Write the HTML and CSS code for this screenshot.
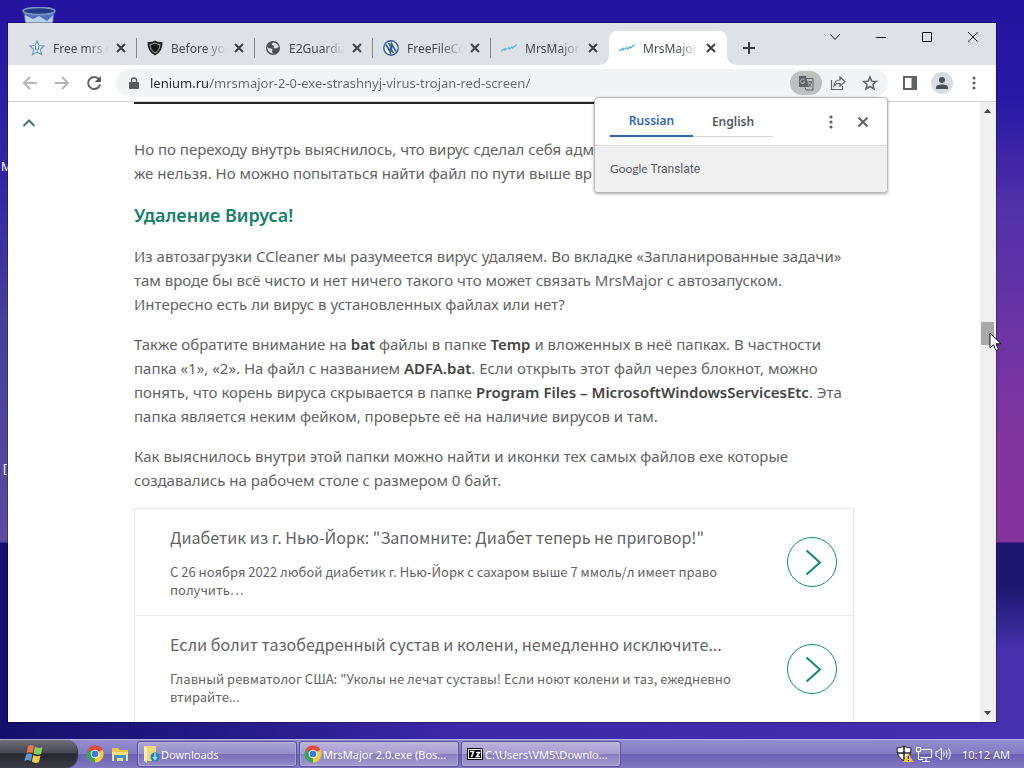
FILE: index.html
```html
<!DOCTYPE html>
<html lang="ru">
<head>
<meta charset="utf-8">
<title>MrsMajor 2.0.exe</title>
<link rel="stylesheet" href="styles.css">
</head>
<body class="desktop">
<svg class="bin" width="36" height="30" viewBox="0 0 36 30" aria-hidden="true"><path d="M2 3L6 29H30L34 3Z" fill="#4d6fbd"/><path d="M4 8L12 12L18 9L26 14L32 8L30 29H6Z" fill="#b9d1ec"/><ellipse cx="18" cy="4" rx="16" ry="3.500" fill="#203b83" stroke="#7d93c4" stroke-width="1.500"/></svg>
<span class="shortcut shortcut-a">M</span>
<span class="shortcut shortcut-b">[</span>

<div class="window">
  <header class="tabstrip">
    <nav class="tabs" aria-label="Tabs">
      <div class="tab"><svg class="ico" viewBox="0 0 16 16"><path d="M8 1L10 5.500L15 6L11.300 9.300L12.500 14.500L8 12L3.500 14.500L4.700 9.300L1 6L6 5.500Z" fill="#e3edf5" stroke="#6f9fc4" stroke-width="1.200"/><path d="M6.500 6V9.500Q8 11 9.500 9.500V6" fill="none" stroke="#4c8abd"/></svg><a class="tab-title" href="#">Free mrs m</a><button class="tab-close" aria-label="Close tab"><svg viewBox="0 0 16 16"><path d="M4 4L12 12M12 4L4 12"/></svg></button></div>
      <div class="tab"><svg class="ico" viewBox="0 0 16 16"><path d="M8 .5Q11 2.500 15.500 2Q16 11.500 8 15.500Q0 11.500 .5 2Q5 2.500 8 .5Z" fill="#222"/><path d="M8 3Q10.500 4.500 13 4.500Q12.800 10.500 8 13Q3.200 10.500 3 4.500Q5.500 4.500 8 3Z" fill="#17181a" stroke="#aaa"/></svg><a class="tab-title" href="#">Before you</a><button class="tab-close" aria-label="Close tab"><svg viewBox="0 0 16 16"><path d="M4 4L12 12M12 4L4 12"/></svg></button></div>
      <div class="tab"><svg class="ico" viewBox="0 0 16 16"><circle cx="8" cy="8" r="7" fill="#4c5055"/><path d="M2 7L5 8.500L7.500 9L7 11.500L8 13.500Q3 13.500 2 7ZM8 2.500Q6 4 7 5L9.500 6L8.500 8L11 8.500L13.800 7Q13 3 8 2.500Z" fill="#dee1e6"/></svg><a class="tab-title" href="#">E2Guardia</a><button class="tab-close" aria-label="Close tab"><svg viewBox="0 0 16 16"><path d="M4 4L12 12M12 4L4 12"/></svg></button></div>
      <div class="tab"><svg class="ico" viewBox="0 0 16 16"><circle cx="8" cy="8" r="7.200" fill="#fff" stroke="#2d6099" stroke-width="1.400"/><path d="M3 4.500L7.500 12.500V8.500L10.500 13M5.500 3L8.500 7.500V3.500L13 11.500" fill="none" stroke="#2d6099" stroke-width="1.700"/></svg><a class="tab-title" href="#">FreeFileCo</a><button class="tab-close" aria-label="Close tab"><svg viewBox="0 0 16 16"><path d="M4 4L12 12M12 4L4 12"/></svg></button></div>
      <div class="tab"><svg class="ico" viewBox="0 0 16 16"><path d="M0 11L4 8.500L4 10L8 7.500L8.500 9L11 7L11.500 8L16 4.500" fill="none" stroke="#5cb5dc" stroke-width="1.300"/></svg><a class="tab-title" href="#">MrsMajor</a><button class="tab-close" aria-label="Close tab"><svg viewBox="0 0 16 16"><path d="M4 4L12 12M12 4L4 12"/></svg></button></div>
      <div class="tab active"><svg class="ico" viewBox="0 0 16 16"><path d="M0 11L4 8.500L4 10L8 7.500L8.500 9L11 7L11.500 8L16 4.500" fill="none" stroke="#5cb5dc" stroke-width="1.300"/></svg><a class="tab-title" href="#" aria-current="page">MrsMajor</a><button class="tab-close" aria-label="Close tab"><svg viewBox="0 0 16 16"><path d="M4 4L12 12M12 4L4 12"/></svg></button></div>
    </nav>
    <button class="new-tab" aria-label="New tab"><svg viewBox="0 0 16 16"><path d="M8 2V14M2 8H14"/></svg></button>
    <div class="controls">
      <button aria-label="Search tabs"><svg viewBox="0 0 12 12"><path d="M1 3L6 8.500L11 3"/></svg></button>
      <button aria-label="Minimize"><svg viewBox="0 0 12 12"><path d="M1 6.500H11"/></svg></button>
      <button aria-label="Maximize"><svg viewBox="0 0 12 12"><path d="M1.500 1.500H10.500V10.500H1.500Z"/></svg></button>
      <button aria-label="Close"><svg viewBox="0 0 12 12"><path d="M1 1L11 11M11 1L1 11"/></svg></button>
    </div>
  </header>

  <div class="toolbar">
    <button class="tool dim" aria-label="Back"><svg viewBox="0 0 16 16"><path d="M15 8H2M8 2L2 8L8 14"/></svg></button>
    <button class="tool dim" aria-label="Forward"><svg viewBox="0 0 16 16"><path d="M1 8H14M8 2L14 8L8 14"/></svg></button>
    <button class="tool" aria-label="Reload"><svg viewBox="0 0 16 16"><path d="M13 4.500A6 6 0 1 0 14 9.500" stroke-width="2"/><path d="M14.800 1V7H8.800Z" fill="#4d5156" stroke="none"/></svg></button>
    <div class="omnibox">
      <svg class="lock" viewBox="0 0 10 12"><path d="M1 5H9Q10 5 10 6V11Q10 12 9 12H1Q0 12 0 11V6Q0 5 1 5Z" fill="#55595e"/><path d="M2.500 5V3.500A2.500 2.500 0 0 1 7.500 3.500V5" fill="none" stroke="#55595e" stroke-width="1.300"/></svg>
      <input class="url" type="text" aria-label="Address" value="lenium.ru/mrsmajor-2-0-exe-strashnyj-virus-trojan-red-screen/">
      <button class="tool pill" aria-label="Translate this page"><svg viewBox="0 0 16 16"><path d="M1 1H8L11 12H1Z" fill="#5f6368" stroke="none"/><path d="M9 3.500H15V15H8L7 12.500" stroke-width="1"/><path d="M6.500 5A2.200 2.200 0 1 0 6.800 7H5" stroke="#bdbdbd" stroke-width="1"/><path d="M9.500 7H14M11.800 6V7M10.500 8.500L13.500 12M13.500 7Q13 10 10.500 12" stroke-width="1"/></svg></button>
      <button class="tool" aria-label="Share"><svg viewBox="0 0 16 16"><path d="M1.500 5V14.500H12.500V11" stroke-width="1.200"/><path d="M4 11Q4.500 5 10 5V2L15 6.700L10 11V8.500Q6.500 8 4 11Z" stroke-width="1.200"/></svg></button>
      <button class="tool" aria-label="Bookmark"><svg viewBox="0 0 16 16"><path d="M8 2L9.800 6.200L14.300 6.500L10.900 9.500L12 14L8 11.500L4 14L5.100 9.500L1.700 6.500L6.200 6.200Z" stroke-width="1.500"/></svg></button>

      <section class="translate" aria-label="Google Translate">
        <div class="translate-head">
          <button class="lang chosen">Russian</button>
          <button class="lang">English</button>
          <span class="spacer"></span>
          <button class="tool" aria-label="Options"><svg viewBox="0 0 16 16"><g fill="#5f6368" stroke="none"><circle cx="8" cy="3" r="1.600"/><circle cx="8" cy="8" r="1.600"/><circle cx="8" cy="13" r="1.600"/></g></svg></button>
          <button class="tool" aria-label="Close"><svg viewBox="0 0 16 16"><path d="M3.500 3.500L12.500 12.500M12.500 3.500L3.500 12.500" stroke-width="2"/></svg></button>
        </div>
        <div class="translate-foot"><span class="brand">Google</span> Translate</div>
      </section>
    </div>
    <button class="tool" aria-label="Side panel"><svg viewBox="0 0 16 16"><path d="M2 2H14V14H2Z" stroke-width="2"/><path d="M9.500 2H14V14H9.500Z" fill="#5f6368" stroke="none"/></svg></button>
    <button class="tool" aria-label="Profile"><svg class="avatar" viewBox="0 0 22 22"><circle cx="11" cy="11" r="11" fill="#dadce5" stroke="none"/><circle cx="11" cy="8" r="3" fill="#4b5057" stroke="none"/><path d="M5 17V15.500Q5 12.500 11 12.500T17 15.500V17Z" fill="#4b5057" stroke="none"/></svg></button>
    <button class="tool" aria-label="Menu"><svg viewBox="0 0 16 16"><g fill="#5f6368" stroke="none"><circle cx="8" cy="3" r="1.600"/><circle cx="8" cy="8" r="1.600"/><circle cx="8" cy="13" r="1.600"/></g></svg></button>
  </div>

  <div class="viewport">
    <button class="to-top" aria-label="Наверх"><svg viewBox="0 0 14 10"><path d="M1.500 8L7 2.500L12.500 8"/></svg></button>
    <main class="page">
      <article class="article">
        <p>Но по переходу внутрь выяснилось, что вирус сделал себя адм<br>же нельзя. Но можно попытаться найти файл по пути выше вр</p>
        <h3>Удаление Вируса!</h3>
        <p>Из автозагрузки CCleaner мы разумеется вирус удаляем. Во вкладке «Запланированные задачи»<br>там вроде бы всё чисто и нет ничего такого что может связать MrsMajor с автозапуском.<br>Интересно есть ли вирус в установленных файлах или нет?</p>
        <p>Также обратите внимание на <b>bat</b> файлы в папке <b>Temp</b> и вложенных в неё папках. В частности<br>папка «1», «2». На файл с названием <b>ADFA.bat</b>. Если открыть этот файл через блокнот, можно<br>понять, что корень вируса скрывается в папке <b>Program Files – MicrosoftWindowsServicesEtc</b>. Эта<br>папка является неким фейком, проверьте её на наличие вирусов и там.</p>
        <p>Как выяснилось внутри этой папки можно найти и иконки тех самых файлов exe которые<br>создавались на рабочем столе с размером 0 байт.</p>
        <div class="promo">
          <a class="promo-item" href="#">
            <span class="promo-text"><span class="promo-title">Диабетик из г. Нью-Йорк: "Запомните: Диабет теперь не приговор!"</span><span class="promo-desc">С 26 ноября 2022 любой диабетик г. Нью-Йорк с сахаром выше 7 ммоль/л имеет право<br>получить…</span></span>
            <svg class="go" viewBox="0 0 50 50"><circle cx="25" cy="25" r="24.500"/><path d="M19.500 13.500L33 25.500L19.500 37.500" stroke-width="2"/></svg>
          </a>
          <a class="promo-item" href="#">
            <span class="promo-text"><span class="promo-title">Если болит тазобедренный сустав и колени, немедленно исключите...</span><span class="promo-desc">Главный ревматолог США: "Уколы не лечат суставы! Если ноют колени и таз, ежедневно<br>втирайте...</span></span>
            <svg class="go" viewBox="0 0 50 50"><circle cx="25" cy="25" r="24.500"/><path d="M19.500 13.500L33 25.500L19.500 37.500" stroke-width="2"/></svg>
          </a>
        </div>
      </article>
    </main>
    <div class="scrollbar">
      <svg class="arrow" viewBox="0 0 15 17"><path d="M4 11L7.500 7L11 11Z"/></svg>
      <div class="before"></div>
      <div class="thumb"><svg class="cursor" viewBox="0 0 13 20"><path d="M1 1V16L4.500 12.800L7 18.500L9.500 17.400L7 11.800H12Z" fill="#fff" stroke="#111"/></svg></div>
      <div class="after"></div>
      <svg class="arrow" viewBox="0 0 15 17"><path d="M4 6L7.500 10L11 6Z"/></svg>
    </div>
  </div>
</div>

<footer class="taskbar">
  <button class="start" aria-label="Start"><svg viewBox="0 0 20 20"><path d="M4 2Q7 0 10 2L8.500 9Q5.500 7.500 2.500 9Z" fill="#e5774a"/><path d="M11 2.500Q14 5 18.500 3L17 10Q13 11.500 9.500 9.500Z" fill="#8bcf5c"/><path d="M2 10.500Q5.500 8.500 8.300 10.500L7 17Q4 15 .5 17Z" fill="#5798d5"/><path d="M9.300 11Q12.500 13 16.500 11.500L15 18Q11 20 7.800 17.500Z" fill="#f1c84c"/></svg></button>
  <div class="quick">
    <button aria-label="Chrome"><svg viewBox="0 0 18 18"><path d="M9 9L1.600 4.700A8.600 8.600 0 0 1 16.400 4.700Z" fill="#df4937"/><path d="M9 9L16.400 4.700A8.600 8.600 0 0 1 9 17.600Z" fill="#f8cb3b"/><path d="M9 9V17.600A8.600 8.600 0 0 1 1.600 4.700Z" fill="#3da35a"/><circle cx="9" cy="9" r="4.300" fill="#fff"/><circle cx="9" cy="9" r="3.300" fill="#397de1"/></svg></button>
    <button aria-label="Explorer"><svg viewBox="0 0 18 18"><path d="M1 3H7L9 5H17V16H1Z" fill="#edc34f"/><path d="M1 7H17V16H1Z" fill="#f9dc7c"/><path d="M3 16V10H15V16H12V13H6V16Z" fill="#4591ce"/></svg></button>
  </div>
  <div class="tasks">
    <button class="task"><svg viewBox="0 0 18 18"><path d="M2 1H14V16H2Z" fill="#eed97c"/><path d="M2 1L5 3V18L2 16Z" fill="#fff1ad"/><circle cx="13" cy="12" r="4.500" fill="#247fae"/><path d="M13 8V14M11 12L13 14.500L15 12" fill="none" stroke="#8de0fa" stroke-width="1.500"/></svg><span>Downloads</span></button>
    <button class="task lit"><svg viewBox="0 0 18 18"><path d="M9 9L1.600 4.700A8.600 8.600 0 0 1 16.400 4.700Z" fill="#df4937"/><path d="M9 9L16.400 4.700A8.600 8.600 0 0 1 9 17.600Z" fill="#f8cb3b"/><path d="M9 9V17.600A8.600 8.600 0 0 1 1.600 4.700Z" fill="#3da35a"/><circle cx="9" cy="9" r="4.300" fill="#fff"/><circle cx="9" cy="9" r="3.300" fill="#397de1"/></svg><span>MrsMajor 2.0.exe (Bos...</span></button>
    <button class="task lit"><svg viewBox="0 0 18 18"><path d="M1.500 3.500H16.500V14.500H1.500Z" fill="#fff" stroke="#000"/><path d="M3 5H15V13H3Z" fill="#000"/><path d="M4 6.500H7.500L5.500 12M10 7.500H13.500L10.500 11.500H14" fill="none" stroke="#fff" stroke-width="1.600"/></svg><span>C:\Users\VM5\Downlo...</span></button>
  </div>
  <div class="tray">
    <svg viewBox="0 0 18 18"><path d="M8 1Q11 3 15 3Q15.500 12 8 16Q.5 12 1 3Q5 3 8 1Z" fill="#fff" stroke="#222"/><path d="M8 1V16M1 8H15" stroke="#222" stroke-width="1.500"/><path d="M12 8L17.500 17H7Z" fill="#f3c33c"/><path d="M12.300 11V14M12.300 15V16" stroke="#222"/></svg>
    <svg viewBox="0 0 18 18"><path d="M5.500 4.500H16.500V12.500H5.500M11 13V16M7 16.500H15M1.500 2.500H5.500V6.500H1.500ZM3.500 7V14.500H8" fill="none" stroke="#fff"/></svg>
    <svg viewBox="0 0 18 18"><path d="M2 6.500H4L7.500 3V15L4 11.500H2ZM9.500 6.500Q11 9 9.500 11.500M12 5Q14.500 9 12 13M14.500 3.500Q18 9 14.500 14.500" fill="none" stroke="#fff"/></svg>
    <time class="clock">10:12 AM</time>
  </div>
</footer>
</body>
</html>
```
FILE: styles.css
```css
* { box-sizing: border-box; }

button {
  border: 0;
  padding: 0;
  background: none;
  font: inherit;
  color: inherit;
  display: flex;
  align-items: center;
  justify-content: center;
}

a { color: inherit; text-decoration: none; }
svg { display: block; flex: none; }

.desktop {
  margin: 0;
  height: 100vh;
  display: flex;
  flex-direction: column;
  overflow: hidden;
  position: relative;
  font-family: "Noto Sans", "Open Sans", sans-serif;
  font-size: 12px;
  background:
    linear-gradient(90deg, #14106a, #241885 20%, #3d28a8 45%, #4530b0) bottom / 100% 46px no-repeat,
    linear-gradient(#2414a0, #2414a0) top / 100% 23px no-repeat,
    linear-gradient(#2414a0 0, #2818a4 100px, #4e30a8 200px, #6a34a5 320px, #80349e 440px, #85349c 542px, #201870 543px, #201870 590px, #4630ac 650px, #4630b0 100%) right / 50% 100% no-repeat,
    linear-gradient(#2414a0 0, #3226a4 180px, #4a4098 330px, #5a4aa0 542px, #15106e 543px, #15106e 100%);
}

.bin { position: absolute; left: 21px; top: 7px; }
.shortcut { position: absolute; left: 1px; color: #fff; line-height: 16px; }
.shortcut-a { top: 159px; }
.shortcut-b { top: 461px; left: 3px; }

.window {
  flex: 1;
  min-height: 0;
  margin: 23px 28px 17px 8px;
  display: flex;
  flex-direction: column;
  background: #fff;
  box-shadow: 0 0 0 1px #0000004d;
  position: relative;
}

.tabstrip { display: flex; height: 42px; background: #dee1e6; color: #45494d; }
.tabs { display: flex; align-items: flex-end; padding-left: 11px; }
.tab {
  width: 118px;
  height: 34px;
  padding: 0 8px 0 10px;
  display: flex;
  align-items: center;
  position: relative;
}
.tab:not(.active)::after {
  content: "";
  position: absolute;
  right: 0;
  top: 7px;
  width: 1px;
  height: 20px;
  background: #85888d;
}
.tab:nth-last-child(2)::after { display: none; }
.tab.active { background: #fff; border-radius: 8px 8px 0 0; }
.tab.active::before, .tab.active::after {
  content: "";
  position: absolute;
  bottom: 0;
  width: 8px;
  height: 8px;
}
.tab.active::before { left: -8px; background: radial-gradient(circle at 0 0, #fff0 7px, #fff 8px); }
.tab.active::after { right: -8px; background: radial-gradient(circle at 100% 0, #fff0 7px, #fff 8px); }
.ico { width: 16px; height: 16px; margin-right: 8px; }
.tab-title {
  flex: 1;
  min-width: 0;
  margin-right: 4px;
  overflow: hidden;
  white-space: nowrap;
  mask-image: linear-gradient(90deg, #000 60%, transparent);
}
.tab-close svg, .new-tab svg { width: 16px; height: 16px; fill: none; stroke: #3c4043; stroke-width: 2; }
.new-tab { width: 28px; margin-left: 8px; padding-top: 8px; }
.controls { display: flex; margin-left: auto; height: 28px; }
.controls button { width: 46px; }
.controls svg { width: 12px; height: 12px; fill: none; stroke: #111; }

.toolbar {
  display: flex;
  align-items: center;
  height: 37px;
  padding: 0 6px;
  border-bottom: 1px solid #d2d4d8;
}
.tool { width: 32px; height: 24px; }
.tool svg { width: 16px; height: 16px; fill: none; stroke: #5f6368; stroke-width: 2; }
.tool svg.avatar { width: 22px; height: 22px; }
.tool.dim svg { stroke: #b3b5b8; }
.omnibox {
  flex: 1;
  min-width: 0;
  height: 28px;
  margin: 0 6px;
  padding: 0 2px 0 13px;
  display: flex;
  align-items: center;
  position: relative;
  background: #f1f3f4;
  border-radius: 14px;
}
.lock { width: 10px; height: 12px; margin-right: 11px; }
.url {
  flex: 1;
  min-width: 0;
  border: 0;
  padding: 0;
  outline: 0;
  font: 13px "Noto Sans", sans-serif;
  color: #5f6368;
  background: linear-gradient(90deg, #26282b 59px, #64686d 59px);
  background-clip: text;
  -webkit-text-fill-color: transparent;
}
.pill { background: #bfc1c1; border-radius: 12px; }

.translate {
  position: absolute;
  right: 0;
  top: 28px;
  width: 294px;
  z-index: 5;
  background: #fff;
  border: 1px solid #b8b8b8;
  border-radius: 4px;
  box-shadow: 0 1px 3px #00000059;
  overflow: hidden;
  color: #55595e;
}
.translate-head { display: flex; align-items: center; height: 48px; padding: 0 8px 0 15px; border-bottom: 1px solid #ddd; }
.lang { width: 80px; height: 30px; border-bottom: 1px solid #d5d7da; font-weight: 600; }
.lang.chosen { width: 83px; color: #3367b5; border-bottom: 2px solid #33679b; }
.spacer { flex: 1; }
.translate-foot { padding: 14px 15px; line-height: 18px; background: #f0f0f0; font-family: Roboto, sans-serif; }
.brand { font-family: Lato, sans-serif; font-size: 12px; }

.viewport { flex: 1; min-height: 0; display: flex; position: relative; }
.to-top { position: absolute; left: 14px; top: 16px; }
.to-top svg { width: 14px; height: 10px; fill: none; stroke: #43786c; stroke-width: 2; }
.page { flex: 1; min-width: 0; overflow: hidden; }
.article {
  max-width: 720px;
  margin: 0 auto;
  padding-top: 33px;
  border-top: 2px solid #222;
  font-family: "Noto Sans", sans-serif;
  font-size: 15px;
  line-height: 24px;
  color: #636363;
  white-space: nowrap;
}
.article p { margin: 0 0 16px; }
.article h3 { margin: 18px 0 17px; font-size: 18px; font-weight: 600; color: #17806a; }
.article b { font-weight: 600; color: #444; }

.promo { border: 1px solid #e8e8e8; font-family: "Noto Sans CJK SC", sans-serif; }
.promo-item { display: flex; align-items: center; justify-content: space-between; padding: 16px 16px 16px 35px; }
.promo-item + .promo-item { border-top: 1px solid #ececec; }
.promo-text { display: flex; flex-direction: column; gap: 14px; }
.promo-title { font-size: 16px; line-height: 24px; }
.promo-desc { font-size: 13px; line-height: 18px; }
.go { width: 50px; height: 50px; fill: none; stroke: #108b7a; }

.scrollbar { width: 16px; display: flex; flex-direction: column; background: #f0f0f0; }
.arrow { width: 15px; height: 17px; fill: #444; }
.before { flex: 36; }
.after { flex: 64; }
.thumb { height: 23px; margin: 0 2px 0 1px; background: #a9a9a9; position: relative; }
.cursor { position: absolute; left: 8px; top: 10px; width: 13px; height: 20px; }

.taskbar {
  display: flex;
  align-items: center;
  height: 29px;
  color: #fff;
  font-size: 11px;
  border-top: 1px solid #b8b3e0;
  background: linear-gradient(#938ccc, #837bc4 50%, #6a60b4 51%, #837ac0);
  text-shadow: 0 1px 1px #0006;
}
.start {
  width: 77px;
  height: 28px;
  padding-right: 9px;
  border-radius: 0 12px 12px 0;
  background: linear-gradient(#6d6e79, #454650 45%, #25262e 50%, #3b3c46);
  box-shadow: 1px 0 1px #333;
}
.start svg { width: 20px; height: 20px; }
.quick { display: flex; gap: 7px; padding: 0 8px 0 9px; }
.quick svg, .task svg, .tray svg { width: 18px; height: 18px; }
.tasks { display: flex; gap: 2px; }
.task {
  width: 160px;
  height: 26px;
  padding: 0 4px;
  gap: 1px;
  justify-content: flex-start;
  border: 1px solid #5a519c;
  border-radius: 3px;
  background: linear-gradient(#aaa3d5, #968dca 50%, #796eb8 51%, #958cca);
  box-shadow: inset 0 0 0 1px #c6c1e488;
  white-space: nowrap;
}
.task.lit { background: linear-gradient(#bbb4dc, #a69cd0 50%, #897ebd 51%, #a59bd0); }
.tray { display: flex; align-items: center; margin-left: auto; padding-right: 14px; gap: 1px; }
.clock { margin-left: 9px; }
```
